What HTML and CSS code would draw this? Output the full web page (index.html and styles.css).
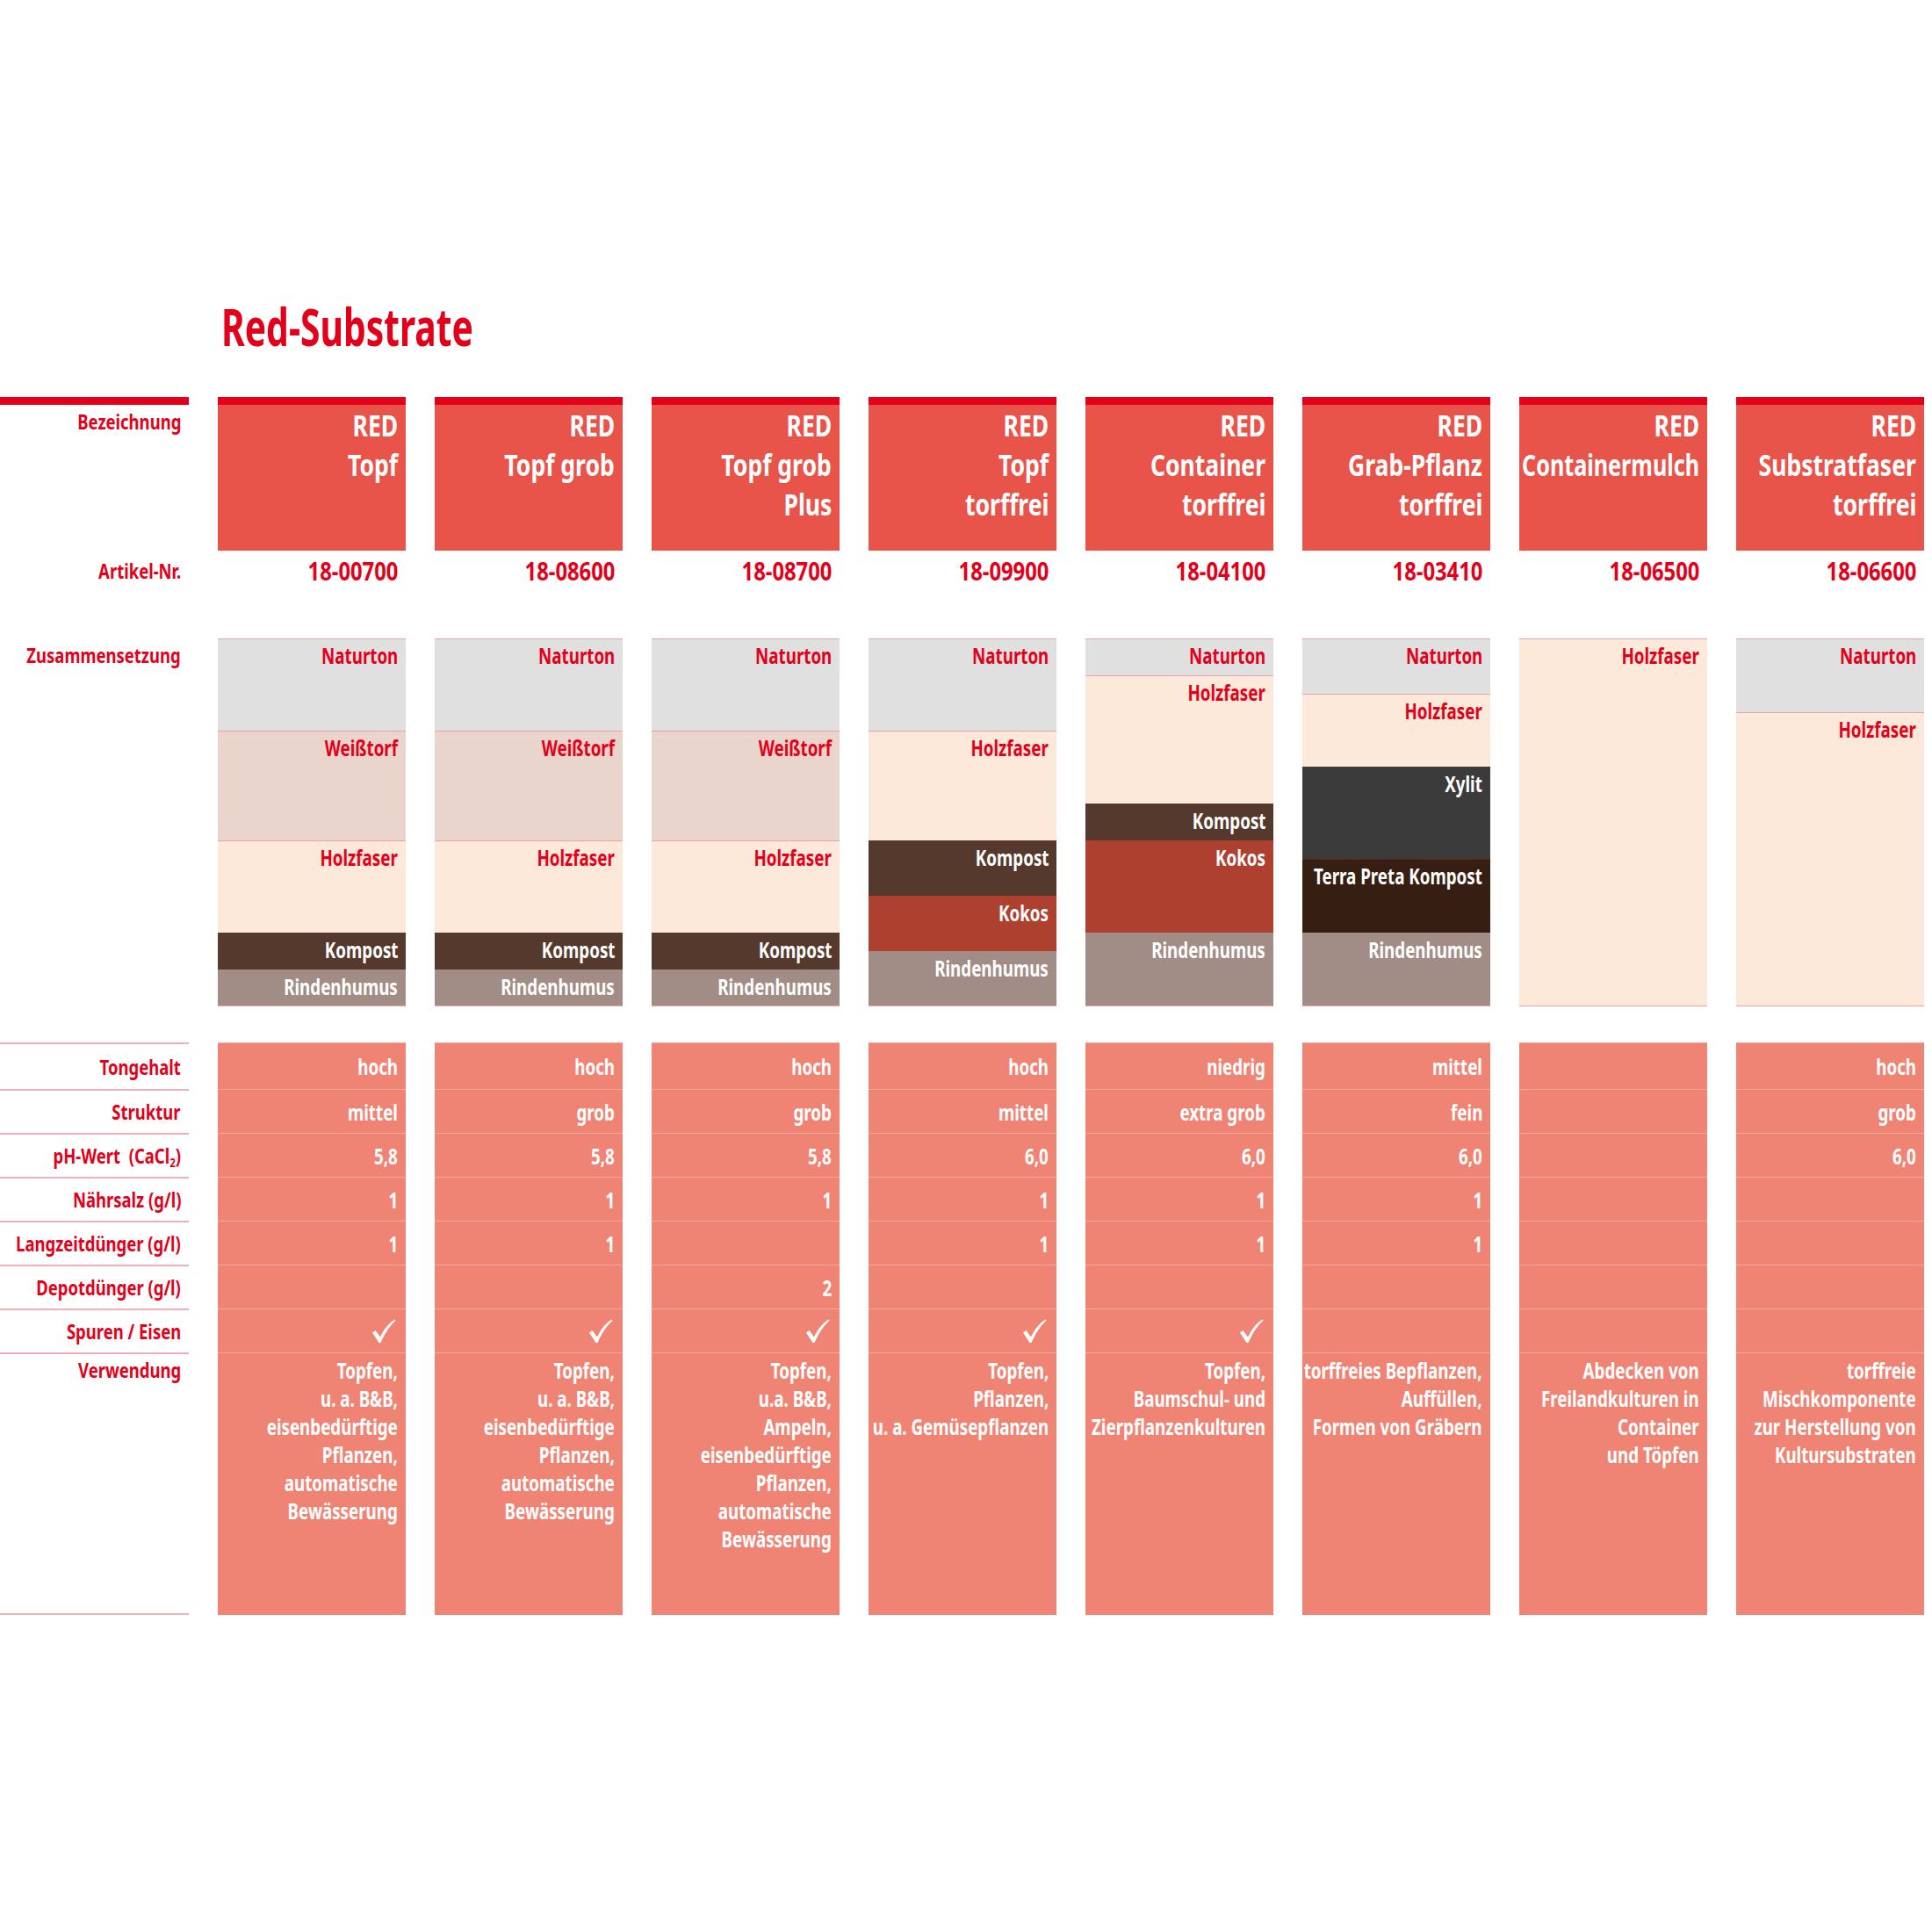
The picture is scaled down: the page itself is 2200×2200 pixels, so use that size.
FILE: index.html
```html
<!DOCTYPE html>
<html lang="de">
<head>
<meta charset="utf-8">
<title>Red-Substrate</title>
<link rel="stylesheet" href="styles.css">
</head>
<body>
<main class="sheet">
  <h1 class="title"><span class="t">Red-Substrate</span></h1>

  <section class="grid head-row">
    <div class="label label-head"><span class="t">Bezeichnung</span></div>
    <div class="product"><span class="t">RED</span><span class="t">Topf</span></div>
    <div class="product"><span class="t">RED</span><span class="t">Topf grob</span></div>
    <div class="product"><span class="t">RED</span><span class="t">Topf grob</span><span class="t">Plus</span></div>
    <div class="product"><span class="t">RED</span><span class="t">Topf</span><span class="t">torffrei</span></div>
    <div class="product"><span class="t">RED</span><span class="t">Container</span><span class="t">torffrei</span></div>
    <div class="product"><span class="t">RED</span><span class="t">Grab-Pflanz</span><span class="t">torffrei</span></div>
    <div class="product"><span class="t">RED</span><span class="t tight">Containermulch</span></div>
    <div class="product"><span class="t">RED</span><span class="t">Substratfaser</span><span class="t">torffrei</span></div>
  </section>

  <section class="grid art-row">
    <div class="label"><span class="t">Artikel-Nr.</span></div>
    <div class="art"><span class="t">18-00700</span></div>
    <div class="art"><span class="t">18-08600</span></div>
    <div class="art"><span class="t">18-08700</span></div>
    <div class="art"><span class="t">18-09900</span></div>
    <div class="art"><span class="t">18-04100</span></div>
    <div class="art"><span class="t">18-03410</span></div>
    <div class="art"><span class="t">18-06500</span></div>
    <div class="art"><span class="t">18-06600</span></div>
  </section>

  <section class="grid comp-row">
    <div class="label"><span class="t">Zusammensetzung</span></div>
    <div class="stack">
      <div class="layer naturton" style="height:105px"><span class="t">Naturton</span></div>
      <div class="layer weisstorf" style="height:125px"><span class="t">Weißtorf</span></div>
      <div class="layer holzfaser" style="height:105px"><span class="t">Holzfaser</span></div>
      <div class="layer kompost" style="height:42px"><span class="t">Kompost</span></div>
      <div class="layer rinde" style="height:41px"><span class="t">Rindenhumus</span></div>
    </div>
    <div class="stack">
      <div class="layer naturton" style="height:105px"><span class="t">Naturton</span></div>
      <div class="layer weisstorf" style="height:125px"><span class="t">Weißtorf</span></div>
      <div class="layer holzfaser" style="height:105px"><span class="t">Holzfaser</span></div>
      <div class="layer kompost" style="height:42px"><span class="t">Kompost</span></div>
      <div class="layer rinde" style="height:41px"><span class="t">Rindenhumus</span></div>
    </div>
    <div class="stack">
      <div class="layer naturton" style="height:105px"><span class="t">Naturton</span></div>
      <div class="layer weisstorf" style="height:125px"><span class="t">Weißtorf</span></div>
      <div class="layer holzfaser" style="height:105px"><span class="t">Holzfaser</span></div>
      <div class="layer kompost" style="height:42px"><span class="t">Kompost</span></div>
      <div class="layer rinde" style="height:41px"><span class="t">Rindenhumus</span></div>
    </div>
    <div class="stack">
      <div class="layer naturton" style="height:105px"><span class="t">Naturton</span></div>
      <div class="layer holzfaser" style="height:125px"><span class="t">Holzfaser</span></div>
      <div class="layer kompost" style="height:63px"><span class="t">Kompost</span></div>
      <div class="layer kokos" style="height:63px"><span class="t">Kokos</span></div>
      <div class="layer rinde" style="height:62px"><span class="t">Rindenhumus</span></div>
    </div>
    <div class="stack">
      <div class="layer naturton" style="height:42px"><span class="t">Naturton</span></div>
      <div class="layer holzfaser" style="height:146px"><span class="t">Holzfaser</span></div>
      <div class="layer kompost" style="height:42px"><span class="t">Kompost</span></div>
      <div class="layer kokos" style="height:105px"><span class="t">Kokos</span></div>
      <div class="layer rinde" style="height:83px"><span class="t">Rindenhumus</span></div>
    </div>
    <div class="stack">
      <div class="layer naturton" style="height:63px"><span class="t">Naturton</span></div>
      <div class="layer holzfaser" style="height:83px"><span class="t">Holzfaser</span></div>
      <div class="layer xylit" style="height:105px"><span class="t">Xylit</span></div>
      <div class="layer terra" style="height:84px"><span class="t">Terra Preta Kompost</span></div>
      <div class="layer rinde" style="height:83px"><span class="t">Rindenhumus</span></div>
    </div>
    <div class="stack">
      <div class="layer holzfaser" style="height:418px"><span class="t">Holzfaser</span></div>
    </div>
    <div class="stack">
      <div class="layer naturton" style="height:84px"><span class="t">Naturton</span></div>
      <div class="layer holzfaser" style="height:334px"><span class="t">Holzfaser</span></div>
    </div>
  </section>

  <section class="props">
    <div class="grid prow first">
      <div class="label plabel"><span class="t">Tongehalt</span></div>
      <div class="val"><span class="t">hoch</span></div><div class="val"><span class="t">hoch</span></div><div class="val"><span class="t">hoch</span></div><div class="val"><span class="t">hoch</span></div>
      <div class="val"><span class="t">niedrig</span></div><div class="val"><span class="t">mittel</span></div><div class="val"></div><div class="val"><span class="t">hoch</span></div>
    </div>
    <div class="grid prow">
      <div class="label plabel"><span class="t">Struktur</span></div>
      <div class="val"><span class="t">mittel</span></div><div class="val"><span class="t">grob</span></div><div class="val"><span class="t">grob</span></div><div class="val"><span class="t">mittel</span></div>
      <div class="val"><span class="t">extra grob</span></div><div class="val"><span class="t">fein</span></div><div class="val"></div><div class="val"><span class="t">grob</span></div>
    </div>
    <div class="grid prow">
      <div class="label plabel"><span class="t">pH-Wert&nbsp;&nbsp;(CaCl<sub>2</sub>)</span></div>
      <div class="val"><span class="t">5,8</span></div><div class="val"><span class="t">5,8</span></div><div class="val"><span class="t">5,8</span></div><div class="val"><span class="t">6,0</span></div>
      <div class="val"><span class="t">6,0</span></div><div class="val"><span class="t">6,0</span></div><div class="val"></div><div class="val"><span class="t">6,0</span></div>
    </div>
    <div class="grid prow">
      <div class="label plabel"><span class="t">Nährsalz (g/l)</span></div>
      <div class="val"><span class="t">1</span></div><div class="val"><span class="t">1</span></div><div class="val"><span class="t">1</span></div><div class="val"><span class="t">1</span></div>
      <div class="val"><span class="t">1</span></div><div class="val"><span class="t">1</span></div><div class="val"></div><div class="val"></div>
    </div>
    <div class="grid prow">
      <div class="label plabel"><span class="t">Langzeitdünger (g/l)</span></div>
      <div class="val"><span class="t">1</span></div><div class="val"><span class="t">1</span></div><div class="val"></div><div class="val"><span class="t">1</span></div>
      <div class="val"><span class="t">1</span></div><div class="val"><span class="t">1</span></div><div class="val"></div><div class="val"></div>
    </div>
    <div class="grid prow">
      <div class="label plabel"><span class="t">Depotdünger (g/l)</span></div>
      <div class="val"></div><div class="val"></div><div class="val"><span class="t">2</span></div><div class="val"></div>
      <div class="val"></div><div class="val"></div><div class="val"></div><div class="val"></div>
    </div>
    <div class="grid prow">
      <div class="label plabel"><span class="t">Spuren / Eisen</span></div>
      <div class="val"><svg class="check" viewBox="0 0 28 28"><path d="M1 15.5 L4.5 13 L10 20.5 C14 12 19.5 5 26.5 0.5 L27.5 1.5 C20.5 8 15 16.5 10.5 27 L8.5 27 Z"/></svg></div>
      <div class="val"><svg class="check" viewBox="0 0 28 28"><path d="M1 15.5 L4.5 13 L10 20.5 C14 12 19.5 5 26.5 0.5 L27.5 1.5 C20.5 8 15 16.5 10.5 27 L8.5 27 Z"/></svg></div>
      <div class="val"><svg class="check" viewBox="0 0 28 28"><path d="M1 15.5 L4.5 13 L10 20.5 C14 12 19.5 5 26.5 0.5 L27.5 1.5 C20.5 8 15 16.5 10.5 27 L8.5 27 Z"/></svg></div>
      <div class="val"><svg class="check" viewBox="0 0 28 28"><path d="M1 15.5 L4.5 13 L10 20.5 C14 12 19.5 5 26.5 0.5 L27.5 1.5 C20.5 8 15 16.5 10.5 27 L8.5 27 Z"/></svg></div>
      <div class="val"><svg class="check" viewBox="0 0 28 28"><path d="M1 15.5 L4.5 13 L10 20.5 C14 12 19.5 5 26.5 0.5 L27.5 1.5 C20.5 8 15 16.5 10.5 27 L8.5 27 Z"/></svg></div>
      <div class="val"></div><div class="val"></div><div class="val"></div>
    </div>
    <div class="grid prow use-row">
      <div class="label plabel use-label"><span class="t">Verwendung</span></div>
      <div class="val use"><span class="t">Topfen,<br>u. a. B&amp;B,<br>eisenbedürftige<br>Pflanzen,<br>automatische<br>Bewässerung</span></div>
      <div class="val use"><span class="t">Topfen,<br>u. a. B&amp;B,<br>eisenbedürftige<br>Pflanzen,<br>automatische<br>Bewässerung</span></div>
      <div class="val use"><span class="t">Topfen,<br>u.a. B&amp;B,<br>Ampeln,<br>eisenbedürftige<br>Pflanzen,<br>automatische<br>Bewässerung</span></div>
      <div class="val use"><span class="t">Topfen,<br>Pflanzen,<br>u. a. Gemüsepflanzen</span></div>
      <div class="val use"><span class="t">Topfen,<br>Baumschul- und<br>Zierpflanzenkulturen</span></div>
      <div class="val use"><span class="t">torffreies Bepflanzen,<br>Auffüllen,<br>Formen von Gräbern</span></div>
      <div class="val use"><span class="t">Abdecken von<br>Freilandkulturen in<br>Container<br>und Töpfen</span></div>
      <div class="val use"><span class="t">torffreie<br>Mischkomponente<br>zur Herstellung von<br>Kultursubstraten</span></div>
    </div>
  </section>
</main>
</body>
</html>
```

FILE: styles.css
```css
html, body {
  margin: 0;
  padding: 0;
  background: #ffffff;
}

body {
  font-family: "Noto Sans", "Open Sans", "Liberation Sans", sans-serif;
  font-weight: 700;
  color: #e2001a;
  --sx: 0.76;
}

.sheet {
  width: 2200px;
  height: 2200px;
}

/* condensed text: the reference uses a bold condensed face */
.t {
  display: inline-block;
  white-space: nowrap;
  transform: scaleX(var(--sx));
  transform-origin: 100% 50%;
}

.title {
  margin: 0 0 48px 252px;
  padding-top: 338px;
  font-size: 60px;
  line-height: 66px;
  font-weight: 700;
  color: #e2001a;
  --sx: 0.68;
}

.title .t {
  transform-origin: 0 50%;
}

.grid {
  display: grid;
  grid-template-columns: 215px repeat(8, 214px);
  column-gap: 33px;
}

.label {
  font-size: 24px;
  line-height: 30px;
  padding-right: 9px;
  color: #e2001a;
  display: flex;
  justify-content: flex-end;
  align-items: flex-start;
  --sx: 0.77;
}

/* header row */
.head-row {
  height: 175px;
}

.label-head {
  border-top: 9px solid #e2001a;
  padding-top: 4px;
}

.product {
  border-top: 9px solid #e2001a;
  background: #e8534a;
  color: #ffffff;
  display: flex;
  flex-direction: column;
  align-items: flex-end;
  padding: 1px 9px 0 0;
  font-size: 34px;
  line-height: 45px;
  --sx: 0.78;
}

.product .tight {
  --sx: 0.74;
}

/* article row */
.art-row {
  height: 100px;
  padding-top: 6px;
  box-sizing: border-box;
}

.art {
  font-size: 29px;
  line-height: 34px;
  display: flex;
  justify-content: flex-end;
  padding-right: 9px;
  color: #e2001a;
  --sx: 0.82;
}

.art-row .label {
  padding-top: 2px;
}

/* composition */
.comp-row {
  height: 418px;
}

.comp-row .label {
  padding-top: 4px;
}

.stack {
  display: flex;
  flex-direction: column;
  border-bottom: 1px solid #e9a3a8;
}

.layer {
  box-sizing: border-box;
  border-top: 1px solid #e9a3a8;
  font-size: 25px;
  line-height: 30px;
  padding: 3px 9px 0 0;
  display: flex;
  justify-content: flex-end;
  align-items: flex-start;
  flex-shrink: 0;
  --sx: 0.75;
}

.naturton { background: #e1e0e1; color: #e2001a; }
.weisstorf { background: #e9d5cc; color: #e2001a; }
.holzfaser { background: #fde9da; color: #e2001a; }
.kompost { background: #55392d; color: #ffffff; border-top-color: #55392d; }
.kokos { background: #ae402f; color: #ffffff; border-top-color: #ae402f; }
.rinde { background: #a28d86; color: #ffffff; border-top-color: #a28d86; }
.xylit { background: #3c3b3b; color: #ffffff; border-top-color: #3c3b3b; }
.terra { background: #361e13; color: #ffffff; border-top-color: #5a2a1e; }

/* properties */
.props {
  margin-top: 42px;
}

.prow {
  height: 50px;
}

.prow.first {
  height: 53px;
}

.plabel {
  border-top: 2px solid #efb0bd;
  align-items: center;
  box-sizing: border-box;
}

.plabel sub {
  font-size: 15px;
  line-height: 0;
  vertical-align: -4px;
}

.val {
  background: #ef8474;
  border-top: 1px solid #f5a99c;
  color: #ffffff;
  font-size: 25px;
  line-height: 30px;
  display: flex;
  align-items: center;
  justify-content: flex-end;
  padding-right: 9px;
  --sx: 0.75;
}

.check {
  width: 28px;
  height: 28px;
  fill: #ffffff;
  margin-right: 2px;
}

.use-row {
  height: 299px;
}

.use-label {
  align-items: flex-start;
  padding-top: 3px;
  border-bottom: 2px solid #efb0bd;
}

.use {
  align-items: flex-start;
  line-height: 32px;
  padding-top: 3px;
}

.use .t {
  text-align: right;
  transform-origin: 100% 0;
}
```
